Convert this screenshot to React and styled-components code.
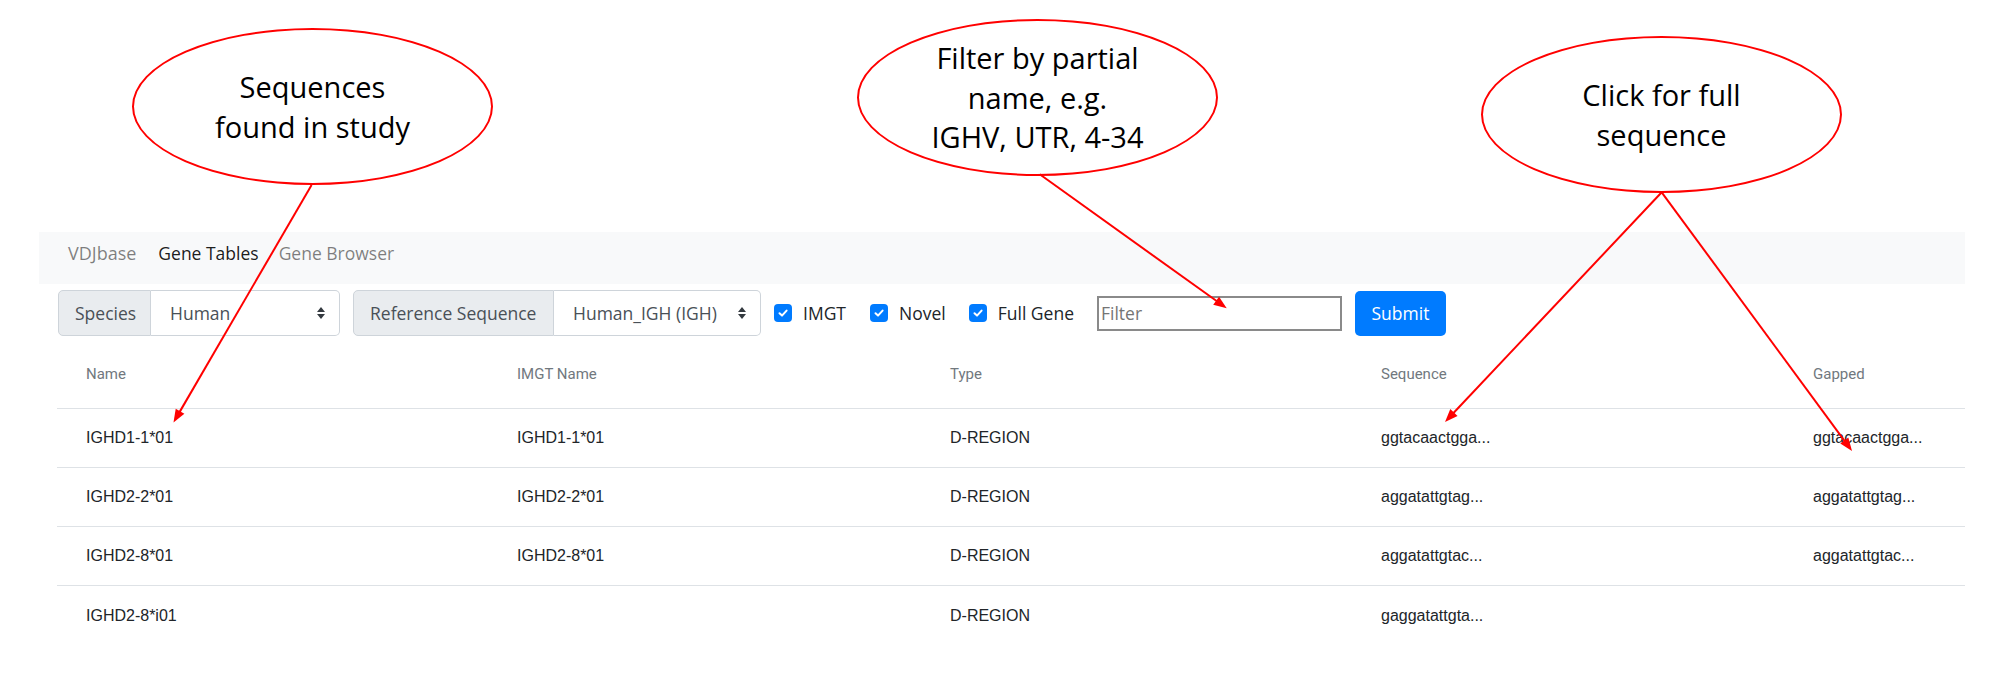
import React from "react";
import styled, { createGlobalStyle } from "styled-components";

const GlobalStyle = createGlobalStyle`
  html, body {
    margin: 0;
    padding: 0;
    background: #fff;
  }
  body {
    font-family: "Open Sans", "Liberation Sans", sans-serif;
  }
`;

const Page = styled.div`
  position: relative;
  width: 2002px;
  height: 691px;
  overflow: hidden;
  box-sizing: border-box;
  padding: 232px 37px 0 39px;
`;

const NavBar = styled.nav`
  height: 52px;
  box-sizing: border-box;
  background: #f8f9fa;
  display: flex;
  align-items: flex-start;
  gap: 20px;
  padding: 8px 0 0 29px;
`;

const Brand = styled.a`
  font-size: 18px;
  line-height: 26px;
  margin-right: 2px;
  text-decoration: none;
  color: rgba(0, 0, 0, 0.5);
`;

const NavLink = styled.a`
  font-size: 17.5px;
  line-height: 26px;
  text-decoration: none;
  color: ${(p) => (p.$active ? "rgba(0,0,0,.9)" : "rgba(0,0,0,.5)")};
`;

const FilterBar = styled.div`
  display: flex;
  align-items: center;
  height: 46px;
  margin: 6px 0 0 19px;
  font-size: 17.5px;
`;

const InputGroup = styled.div`
  display: flex;
  height: 46px;
  margin-right: 13px;
`;

const Addon = styled.span`
  display: flex;
  align-items: center;
  box-sizing: border-box;
  width: ${(p) => p.$w}px;
  padding: 0 16px;
  background: #e9ecef;
  border: 1px solid #ced4da;
  border-radius: 5px 0 0 5px;
  color: #495057;
  white-space: nowrap;
`;

const Select = styled.div`
  display: flex;
  align-items: center;
  justify-content: space-between;
  box-sizing: border-box;
  width: ${(p) => p.$w}px;
  padding: 0 14px 0 19px;
  background: #fff;
  border: 1px solid #ced4da;
  border-left: none;
  border-radius: 0 5px 5px 0;
  color: #495057;
  white-space: nowrap;
`;

const Check = styled.label`
  display: flex;
  align-items: center;
  gap: 11px;
  margin-left: ${(p) => p.$ml || 0}px;
  color: #212529;
  white-space: nowrap;
`;

const Box = styled.span`
  display: flex;
  align-items: center;
  justify-content: center;
  width: 18px;
  height: 18px;
  border-radius: 4px;
  background: #007bff;
`;

const FilterInput = styled.input`
  box-sizing: border-box;
  width: 245px;
  height: 35px;
  margin-left: 23px;
  padding: 0 2px;
  border: 2px solid #8a8a8a;
  border-radius: 0;
  font-family: "Open Sans", sans-serif;
  font-size: 17.5px;
  color: #212529;
  outline: none;
  &::placeholder {
    color: #757575;
  }
`;

const SubmitButton = styled.button`
  width: 91px;
  height: 45px;
  margin-left: 13px;
  border: none;
  border-radius: 5px;
  background: #007bff;
  color: #fff;
  font-family: "Open Sans", sans-serif;
  font-size: 17.5px;
  padding: 0;
`;

const Table = styled.div`
  width: 1908px;
  margin: 4px 0 0 18px;
`;

const Row = styled.div`
  display: grid;
  grid-template-columns: 431px 433px 431px 432px 1fr;
  align-items: center;
  box-sizing: border-box;
  height: ${(p) => (p.$head ? 69 : 59)}px;
  border-bottom: ${(p) => (p.$last ? "none" : "1px solid #dee2e6")};
`;

const HeadCell = styled.div`
  padding-left: 29px;
  font-family: Roboto, "Liberation Sans", sans-serif;
  font-size: 15px;
  color: #71787e;
`;

const Cell = styled.div`
  padding-left: 29px;
  font-family: "Liberation Sans", Arial, sans-serif;
  font-size: 16px;
  color: #212529;
  white-space: nowrap;
`;

const Bubble = styled.div`
  position: absolute;
  left: ${(p) => p.$x}px;
  top: ${(p) => p.$y}px;
  width: 361px;
  height: 157px;
  box-sizing: border-box;
  border: 2px solid #ff0000;
  border-radius: 50%;
  background: #fff;
  display: flex;
  align-items: center;
  justify-content: center;
  text-align: center;
  font-family: "Open Sans", sans-serif;
  font-size: 29px;
  line-height: 39.5px;
  color: #000;
`;

const ArrowLayer = styled.svg`
  position: absolute;
  left: 0;
  top: 0;
  pointer-events: none;
`;

const SelectArrows = () => (
  <svg width="8" height="12" viewBox="0 0 8 12">
    <path d="M0 5 L4 0 L8 5 Z M0 7 L4 12 L8 7 Z" fill="#343a40" />
  </svg>
);

const CheckMark = () => (
  <svg width="12" height="12" viewBox="0 0 12 12">
    <path d="M2.5 6.3 L5 8.6 L9.6 3.6" fill="none" stroke="#fff" strokeWidth="2" strokeLinecap="round" strokeLinejoin="round" />
  </svg>
);

const arrows = [
  { s: [311.6, 185], t: [173.5, 422.5] },
  { s: [1039.7, 174.3], t: [1226.7, 308.3] },
  { s: [1661.7, 192.3], t: [1445, 422] },
  { s: [1661.7, 192.3], t: [1852, 451] },
];

const headPoints = (s, t, len = 13, half = 5) => {
  const dx = t[0] - s[0];
  const dy = t[1] - s[1];
  const l = Math.hypot(dx, dy);
  const ux = dx / l;
  const uy = dy / l;
  const bx = t[0] - ux * len;
  const by = t[1] - uy * len;
  return {
    base: [bx + ux, by + uy],
    pts: `${t[0]},${t[1]} ${bx - uy * half},${by + ux * half} ${bx + uy * half},${by - ux * half}`,
  };
};

const rows = [
  ["IGHD1-1*01", "IGHD1-1*01", "D-REGION", "ggtacaactgga...", "ggtacaactgga..."],
  ["IGHD2-2*01", "IGHD2-2*01", "D-REGION", "aggatattgtag...", "aggatattgtag..."],
  ["IGHD2-8*01", "IGHD2-8*01", "D-REGION", "aggatattgtac...", "aggatattgtac..."],
  ["IGHD2-8*i01", "", "D-REGION", "gaggatattgta...", ""],
];

const headers = ["Name", "IMGT Name", "Type", "Sequence", "Gapped"];

export default function App() {
  return (
    <>
      <GlobalStyle />
      <Page>
        <NavBar>
          <Brand>VDJbase</Brand>
          <NavLink $active>Gene Tables</NavLink>
          <NavLink>Gene Browser</NavLink>
        </NavBar>

        <FilterBar>
          <InputGroup>
            <Addon $w={93}>Species</Addon>
            <Select $w={189}>
              <span>Human</span>
              <SelectArrows />
            </Select>
          </InputGroup>
          <InputGroup>
            <Addon $w={201}>Reference Sequence</Addon>
            <Select $w={207}>
              <span>Human_IGH (IGH)</span>
              <SelectArrows />
            </Select>
          </InputGroup>
          <Check>
            <Box><CheckMark /></Box>
            IMGT
          </Check>
          <Check $ml={24}>
            <Box><CheckMark /></Box>
            Novel
          </Check>
          <Check $ml={23}>
            <Box><CheckMark /></Box>
            Full Gene
          </Check>
          <FilterInput placeholder="Filter" />
          <SubmitButton>Submit</SubmitButton>
        </FilterBar>

        <Table>
          <Row $head>
            {headers.map((h) => (
              <HeadCell key={h}>{h}</HeadCell>
            ))}
          </Row>
          {rows.map((r, i) => (
            <Row key={i} $last={i === rows.length - 1}>
              {r.map((c, j) => (
                <Cell key={j}>{c}</Cell>
              ))}
            </Row>
          ))}
        </Table>

        <Bubble $x={132} $y={28}>
          Sequences
          <br />
          found in study
        </Bubble>
        <Bubble $x={857} $y={19}>
          Filter by partial
          <br />
          name, e.g.
          <br />
          IGHV, UTR, 4-34
        </Bubble>
        <Bubble $x={1481} $y={36}>
          Click for full
          <br />
          sequence
        </Bubble>

        <ArrowLayer width="2002" height="691" viewBox="0 0 2002 691">
          {arrows.map((a, i) => {
            const h = headPoints(a.s, a.t);
            return (
              <g key={i}>
                <line x1={a.s[0]} y1={a.s[1]} x2={h.base[0]} y2={h.base[1]} stroke="#ff0000" strokeWidth="2" />
                <polygon points={h.pts} fill="#ff0000" />
              </g>
            );
          })}
        </ArrowLayer>
      </Page>
    </>
  );
}
